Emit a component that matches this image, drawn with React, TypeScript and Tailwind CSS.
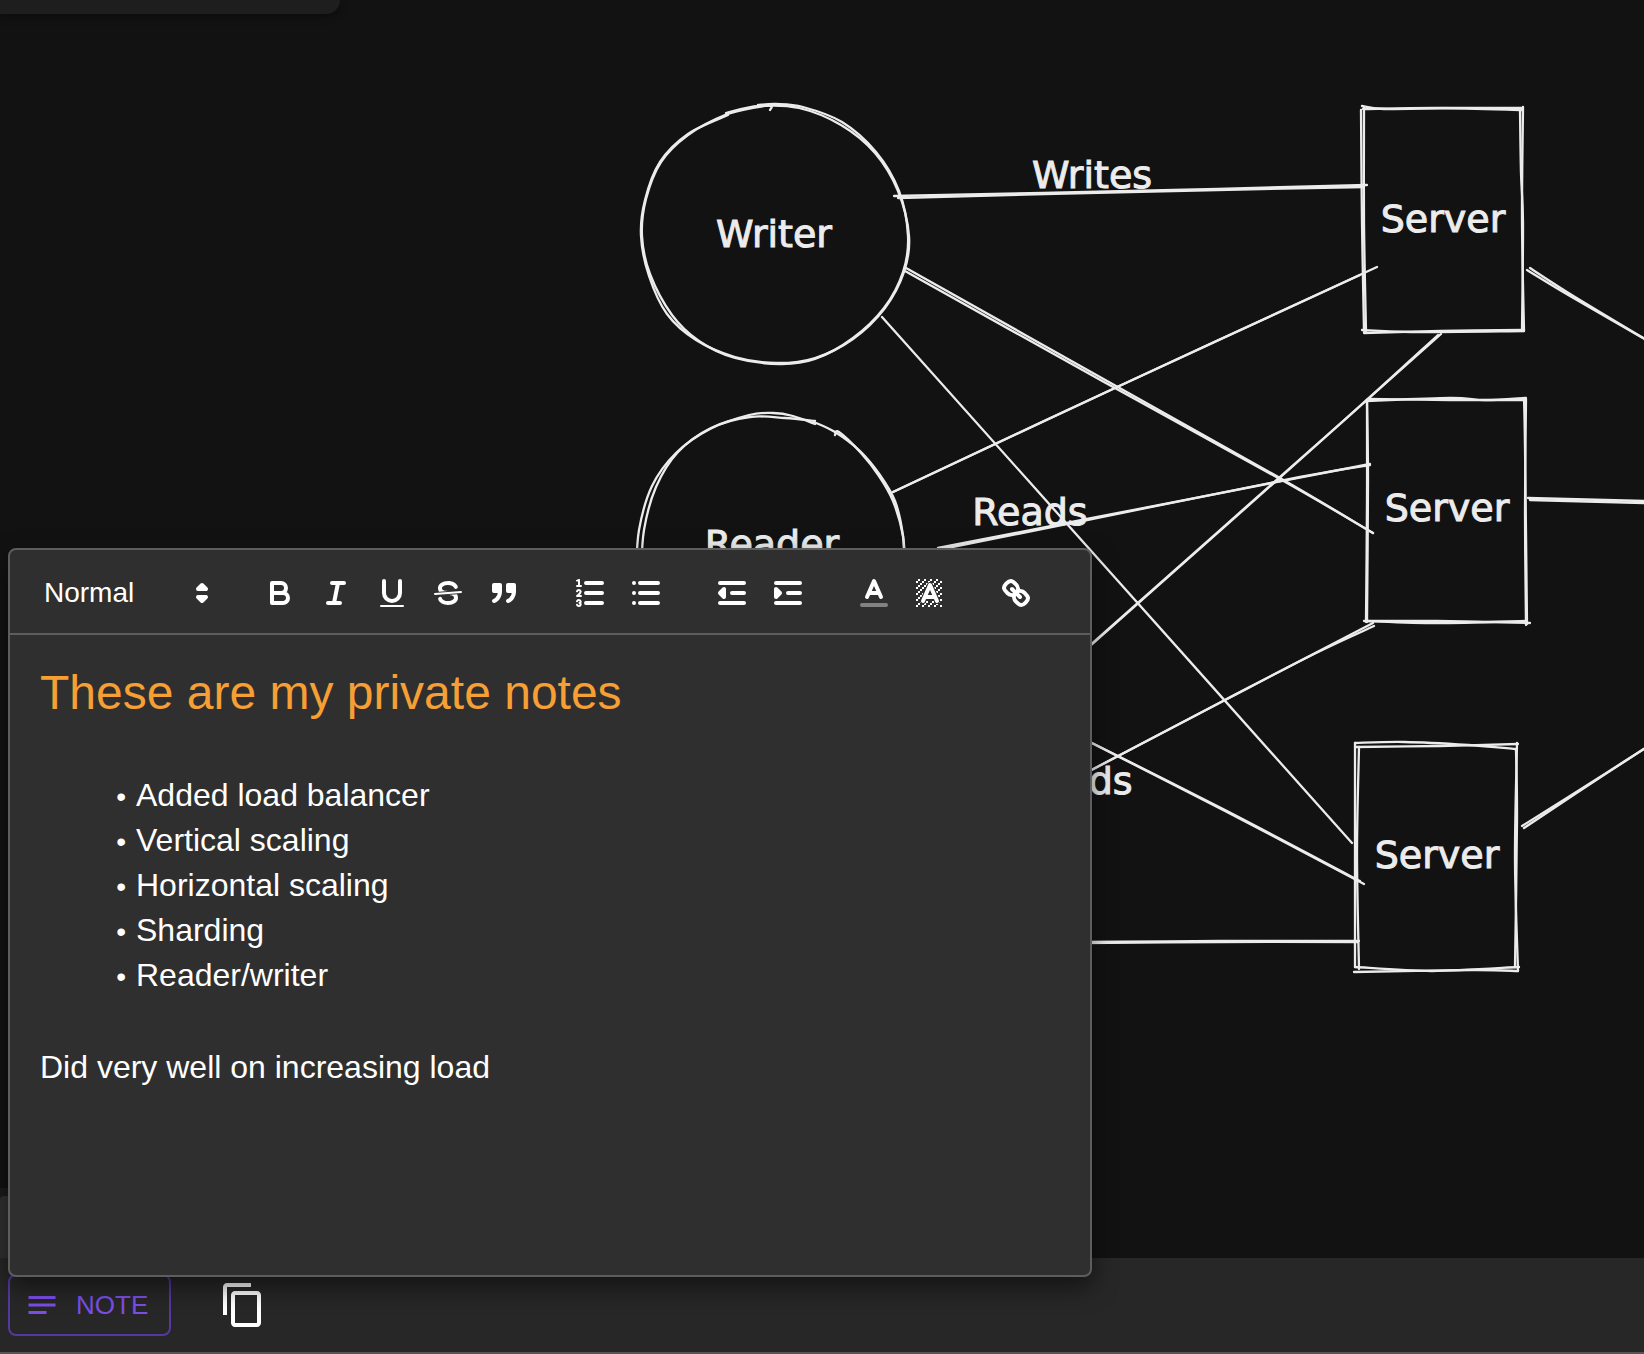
import type { ReactNode } from "react";

type Point = [number, number];

/** Smooth open path through a list of points (Catmull-Rom to Bézier). */
function curve(points: Point[]): string {
  let d = `M${points[0][0]} ${points[0][1]}`;
  for (let i = 0; i < points.length - 1; i++) {
    const p0 = points[i - 1] ?? points[i];
    const p1 = points[i];
    const p2 = points[i + 1];
    const p3 = points[i + 2] ?? p2;
    const c1x = p1[0] + (p2[0] - p0[0]) / 6;
    const c1y = p1[1] + (p2[1] - p0[1]) / 6;
    const c2x = p2[0] - (p3[0] - p1[0]) / 6;
    const c2y = p2[1] - (p3[1] - p1[1]) / 6;
    d += `C${c1x} ${c1y} ${c2x} ${c2y} ${p2[0]} ${p2[1]}`;
  }
  return d;
}

const circles: Point[][] = [
  // Writer
  [
    [726, 113], [759, 106], [799, 108], [841, 125], [875, 153], [898, 191], [909, 236], [904, 272],
    [885, 308], [853, 339], [815, 358], [776, 363], [735, 357], [696, 340], [667, 314], [649, 276],
    [641, 236], [645, 200], [660, 162], [688, 134], [728, 115],
  ],
  [
    [758, 105], [776, 104], [803, 107], [842, 122], [876, 152], [899, 191], [908, 236], [903, 272],
    [884, 308], [853, 338], [815, 359], [780, 364], [735, 358], [699, 341], [672, 315], [650, 274],
    [642, 236], [646, 199], [661, 162], [688, 135], [725, 115], [758, 107], [771, 106], [770, 110],
  ],
  // Reader
  [
    [636, 575], [639, 530], [652, 486], [676, 453], [710, 429], [749, 415], [773, 413], [793, 416], [815, 424],
  ],
  [
    [641, 575], [644, 530], [656, 487], [678, 452], [711, 428], [750, 417], [785, 418], [815, 421],
  ],
  [[814, 422], [835, 432], [860, 451], [880, 475], [895, 501], [903, 536], [904, 570]],
  [[835, 435], [839, 432], [861, 453], [879, 476], [893, 501], [903, 536], [905, 570]],
];

const boxes: Point[][] = [
  // Top server
  [[1362, 106], [1384, 109], [1450, 108], [1523, 108]],
  [[1363, 109], [1440, 108], [1523, 110]],
  [[1361, 110], [1362, 223], [1364, 331]],
  [[1364, 108], [1364, 223], [1366, 331]],
  [[1520, 110], [1521, 173], [1523, 223], [1522, 331]],
  [[1523, 107], [1522, 220], [1524, 331]],
  [[1362, 330], [1410, 332], [1524, 331]],
  [[1364, 333], [1440, 331], [1524, 330]],
  // Middle server
  [[1366, 401], [1450, 398], [1485, 400], [1526, 398]],
  [[1368, 399], [1450, 400], [1524, 400]],
  [[1367, 400], [1367, 500], [1366, 622]],
  [[1367, 400], [1368, 480], [1367, 622]],
  [[1524, 398], [1525, 447], [1527, 624]],
  [[1526, 399], [1525, 513], [1526, 625]],
  [[1364, 621], [1437, 621], [1530, 623]],
  [[1366, 621], [1437, 623], [1526, 621]],
  // Bottom server
  [[1355, 743], [1404, 742], [1468, 745], [1515, 749]],
  [[1356, 747], [1440, 746], [1518, 744]],
  [[1355, 743], [1355, 967]],
  [[1359, 747], [1357, 853], [1359, 969]],
  [[1517, 743], [1515, 860], [1518, 971]],
  [[1516, 749], [1517, 820], [1515, 967]],
  [[1355, 967], [1432, 971], [1519, 967]],
  [[1354, 972], [1472, 970], [1518, 971]],
];

const links: Point[][] = [
  [[894, 196], [1130, 191], [1367, 185]],
  [[898, 198], [1130, 192], [1364, 187]],
  [[906, 268], [1116, 386], [1280, 478], [1373, 533]],
  [[905, 271], [1104, 382], [1280, 479], [1373, 533]],
  [[882, 317], [1118, 581], [1352, 843]],
  [[893, 492], [1115, 388], [1377, 267]],
  [[893, 492], [1115, 388], [1360, 275]],
  [[938, 548], [1087, 519], [1370, 464]],
  [[942, 549], [1087, 520], [1300, 477], [1370, 465]],
  [[1080, 654], [1368, 399], [1441, 334]],
  [[1080, 655], [1330, 433], [1438, 335]],
  [[1080, 776], [1225, 700], [1373, 623]],
  [[1080, 776], [1225, 700], [1314, 654], [1374, 626]],
  [[1080, 737], [1225, 811], [1364, 884]],
  [[1080, 737], [1225, 810], [1360, 881]],
  [[1080, 943], [1220, 942], [1358, 942]],
  [[1080, 942], [1220, 941], [1359, 941]],
  [[1527, 270], [1570, 296], [1650, 342]],
  [[1530, 268], [1575, 297], [1650, 342]],
  [[1528, 498], [1644, 501]],
  [[1530, 500], [1644, 503]],
  [[1522, 826], [1570, 796], [1650, 745]],
  [[1524, 828], [1575, 794], [1650, 745]],
];

const labels = [
  { text: "Writer", x: 774, y: 247 },
  { text: "Reader", x: 772, y: 557 },
  { text: "Writes", x: 1092, y: 188 },
  { text: "Reads", x: 1030, y: 525 },
  { text: "Reads", x: 1075, y: 794 },
  { text: "Server", x: 1443, y: 232 },
  { text: "Server", x: 1447, y: 521 },
  { text: "Server", x: 1437, y: 868 },
];

function Diagram() {
  return (
    <svg width="1644" height="1258" viewBox="0 0 1644 1258" className="absolute top-0 left-0" role="img" aria-label="Architecture diagram">
      <g fill="none" stroke="#ececec" strokeWidth="2.3" strokeLinecap="round">
        {[...circles, ...boxes, ...links].map((points, i) => (
          <path key={i} d={curve(points)} />
        ))}
      </g>
      <g className="fill-[#ececec] stroke-[#ececec] stroke-1 font-['Virgil','DejaVu_Sans',sans-serif] text-[38px]" textAnchor="middle">
        {labels.map((l, i) => (
          <text key={i} x={l.x} y={l.y}>
            {l.text}
          </text>
        ))}
      </g>
    </svg>
  );
}

function ToolIcon({ children }: { children: ReactNode }) {
  return (
    <svg viewBox="0 0 18 18" className="size-9" fill="none" stroke="currentColor" strokeWidth="2" strokeLinecap="round" strokeLinejoin="round" aria-hidden="true">
      {children}
    </svg>
  );
}

const hatch: Point[] = [];
for (let y = 2; y <= 15; y++) {
  for (let x = 2; x <= 14; x++) {
    if ((x + y) % 3 === 2) hatch.push([x, y]);
  }
}

const groups: { label: string; icon: ReactNode }[][] = [
  [
    {
      label: "Bold",
      icon: (
        <>
          <path d="M5,4H9.5A2.5,2.5,0,0,1,12,6.5v0A2.5,2.5,0,0,1,9.5,9H5V4Z" />
          <path d="M5,9h5.5A2.5,2.5,0,0,1,13,11.5v0A2.5,2.5,0,0,1,10.5,14H5V9Z" />
        </>
      ),
    },
    { label: "Italic", icon: <path d="M7 4H13M5 14H11M8 14L10 4" /> },
    {
      label: "Underline",
      icon: (
        <>
          <path d="M5,3V9a4.012,4.012,0,0,0,4,4H9a4.012,4.012,0,0,0,4-4V3" />
          <rect x="3" y="15" width="12" height="1" rx=".5" fill="currentColor" stroke="none" />
        </>
      ),
    },
    {
      label: "Strikethrough",
      icon: (
        <>
          <path strokeWidth="1" d="M15.5 8.5L2.5 9.5" />
          <g fill="currentColor" stroke="none">
            <path d="M9.007,8C6.542,7.791,6,7.519,6,6.5,6,5.792,7.283,5,9,5c1.571,0,2.765.679,2.969,1.309a1,1,0,0,0,1.9-.617C13.356,4.106,11.354,3,9,3,6.2,3,4,4.538,4,6.5a3.2,3.2,0,0,0,.5,1.843Z" />
            <path d="M8.984,10C11.457,10.208,12,10.479,12,11.5c0,0.708-1.283,1.5-3,1.5-1.571,0-2.765-.679-2.969-1.309a1,1,0,1,0-1.900.617C4.644,13.894,6.646,15,9,15c2.800,0,5-1.538,5-3.500a3.200,3.200,0,0,0-.5-1.843Z" />
          </g>
        </>
      ),
    },
    {
      label: "Quote",
      icon: (
        <g fill="currentColor">
          <rect x="4" y="5" width="3" height="3" />
          <rect x="11" y="5" width="3" height="3" />
          <path d="M7,8c0,4.031-3,5-3,5" fillRule="evenodd" />
          <path d="M14,8c0,4.031-3,5-3,5" fillRule="evenodd" />
        </g>
      ),
    },
  ],
  [
    {
      label: "Numbered list",
      icon: (
        <>
          <path d="M7 4H15M7 9H15M7 14H15" />
          <path strokeWidth="1" d="M2.5 5.5H4.5" />
          <path fill="currentColor" stroke="none" d="M3.5,6A0.5,0.5,0,0,1,3,5.5V3.085l-0.276.138A0.5,0.5,0,0,1,2.053,3c-0.124-.247-0.023-0.324.224-0.447l1-.5A0.5,0.5,0,0,1,4,2.5v3A0.5,0.5,0,0,1,3.5,6Z" />
          <path strokeWidth="1" d="M4.5,10.5h-2c0-.234,1.85-1.076,1.85-2.234A0.959,0.959,0,0,0,2.5,8.156" />
          <path strokeWidth="1" d="M2.5,14.846a0.959,0.959,0,0,0,1.85-.109A0.7,0.7,0,0,0,3.75,14a0.688,0.688,0,0,0,.6-0.736,0.959,0.959,0,0,0-1.85-.109" />
        </>
      ),
    },
    { label: "Bulleted list", icon: <path d="M6 4H15M6 9H15M6 14H15M3 4H3M3 9H3M3 14H3" /> },
  ],
  [
    {
      label: "Decrease indent",
      icon: (
        <>
          <path d="M3 14H15M3 4H15M9 9H15" />
          <path fill="currentColor" d="M5 7V11L3 9Z" />
        </>
      ),
    },
    {
      label: "Increase indent",
      icon: (
        <>
          <path d="M3 14H15M3 4H15M9 9H15" />
          <path fill="currentColor" d="M3 7V11L5 9Z" />
        </>
      ),
    },
  ],
  [
    {
      label: "Text color",
      icon: (
        <>
          <path opacity="0.4" d="M3 15H15" />
          <path d="M5.5 11L9 3L12.5 11M11.63 9H6.38" />
        </>
      ),
    },
    {
      label: "Background color",
      icon: (
        <>
          {hatch.map(([x, y]) => (
            <rect key={`${x}-${y}`} x={x} y={y} width="1" height="1" fill="currentColor" stroke="none" />
          ))}
          <path className="fill-[#2f2f2f] stroke-[#2f2f2f]" strokeWidth="3" d="M5.5 13L9 5L12.5 13M11.63 11H6.38" />
          <path d="M5.5 13L9 5L12.5 13M11.63 11H6.38" />
        </>
      ),
    },
  ],
  [
    {
      label: "Link",
      icon: (
        <>
          <path d="M7 7L11 11" />
          <path d="M8.9,4.577a3.476,3.476,0,0,1,.36,4.679A3.476,3.476,0,0,1,4.577,8.9C3.185,7.5,2.035,6.4,4.217,4.217S7.5,3.185,8.9,4.577Z" />
          <path d="M13.423,9.1a3.476,3.476,0,0,0-4.679-.36,3.476,3.476,0,0,0,.36,4.679c1.392,1.392,2.5,2.542,4.679.36S14.815,10.5,13.423,9.1Z" />
        </>
      ),
    },
  ],
];

const items = ["Added load balancer", "Vertical scaling", "Horizontal scaling", "Sharding", "Reader/writer"];

function NotePanel() {
  return (
    <section aria-label="Note" className="absolute bottom-[77px] left-2 w-[1084px] rounded-lg border-2 border-[#5d5d5d] bg-[#2f2f2f] text-white shadow-[0_10px_24px_rgba(0,0,0,0.5)]">
      <div role="toolbar" aria-label="Formatting" className="flex items-center gap-[30px] border-b-2 border-[#5d5d5d] px-4 pt-[19px] pb-4">
        <div className="relative w-[196px]">
          <select aria-label="Text style" className="h-12 w-full appearance-none bg-transparent pl-[18px] text-[28px] font-medium outline-none">
            <option>Normal</option>
            <option>Heading</option>
          </select>
          <svg viewBox="0 0 18 18" className="pointer-events-none absolute top-[6px] right-[2px] size-9" fill="currentColor" stroke="currentColor" strokeWidth="2" strokeLinejoin="round" aria-hidden="true">
            <path d="M7 11L9 13L11 11Z" />
            <path d="M7 7L9 5L11 7Z" />
          </svg>
        </div>
        {groups.map((group, i) => (
          <div key={i} className="flex">
            {group.map((tool) => (
              <button key={tool.label} type="button" aria-label={tool.label} className="px-[10px] py-[6px]">
                <ToolIcon>{tool.icon}</ToolIcon>
              </button>
            ))}
          </div>
        ))}
      </div>
      <div
        role="textbox"
        aria-multiline="true"
        aria-label="Note text"
        contentEditable
        suppressContentEditableWarning
        spellCheck={false}
        className="min-h-[640px] px-[30px] py-6 text-[32px] leading-[45px] outline-none"
      >
        <h1 className="mb-[46px] text-[48px] leading-[68px] text-[#f59f35]">These are my private notes</h1>
        <ul className="mb-[47px] pl-12">
          {items.map((item) => (
            <li key={item} className="pl-12 before:mr-[10px] before:-ml-12 before:inline-block before:w-[38px] before:text-right before:text-[28px] before:leading-none before:content-['•']">
              {item}
            </li>
          ))}
        </ul>
        <p>Did very well on increasing load</p>
      </div>
    </section>
  );
}

export default function App() {
  return (
    <div className="relative flex min-h-screen flex-col overflow-hidden bg-[#121212] font-['Liberation_Sans',Arial,sans-serif]">
      <main className="relative flex-1 overflow-hidden">
        <Diagram />
        <div className="absolute top-0 left-0 h-[14px] w-[340px] rounded-br-2xl bg-[#1e1e1e] shadow-[0_2px_8px_rgba(0,0,0,0.4)]" />
        <div className="absolute bottom-0 left-0 w-80 bg-[#1b1b1b] pt-2">
          <div className="h-[62px] rounded-t bg-[#313131]" />
        </div>
      </main>
      <footer className="flex items-center gap-12 border-b-2 border-[#555] bg-[#272727] px-2 py-4">
        <button type="button" className="flex h-[62px] items-center gap-4 rounded-lg border-2 border-[#56389f] pr-[21px] pl-[18px] text-[26px] text-[#7c4ee9]">
          <svg viewBox="0 0 24 24" className="-ml-1 size-9" fill="currentColor" aria-hidden="true">
            <path d="M3 18h12v-2H3v2zM3 6v2h18V6H3zm0 7h18v-2H3v2z" />
          </svg>
          NOTE
        </button>
        <button type="button" aria-label="Copy" className="text-white">
          <svg viewBox="0 0 24 24" className="size-12" fill="currentColor" aria-hidden="true">
            <path d="M16 1H4c-1.100 0-2 .9-2 2v14h2V3h12V1zm3 4H8c-1.100 0-2 .9-2 2v14c0 1.100.9 2 2 2h11c1.100 0 2-.9 2-2V7c0-1.100-.9-2-2-2zm0 16H8V7h11v14z" />
          </svg>
        </button>
      </footer>
      <NotePanel />
    </div>
  );
}
